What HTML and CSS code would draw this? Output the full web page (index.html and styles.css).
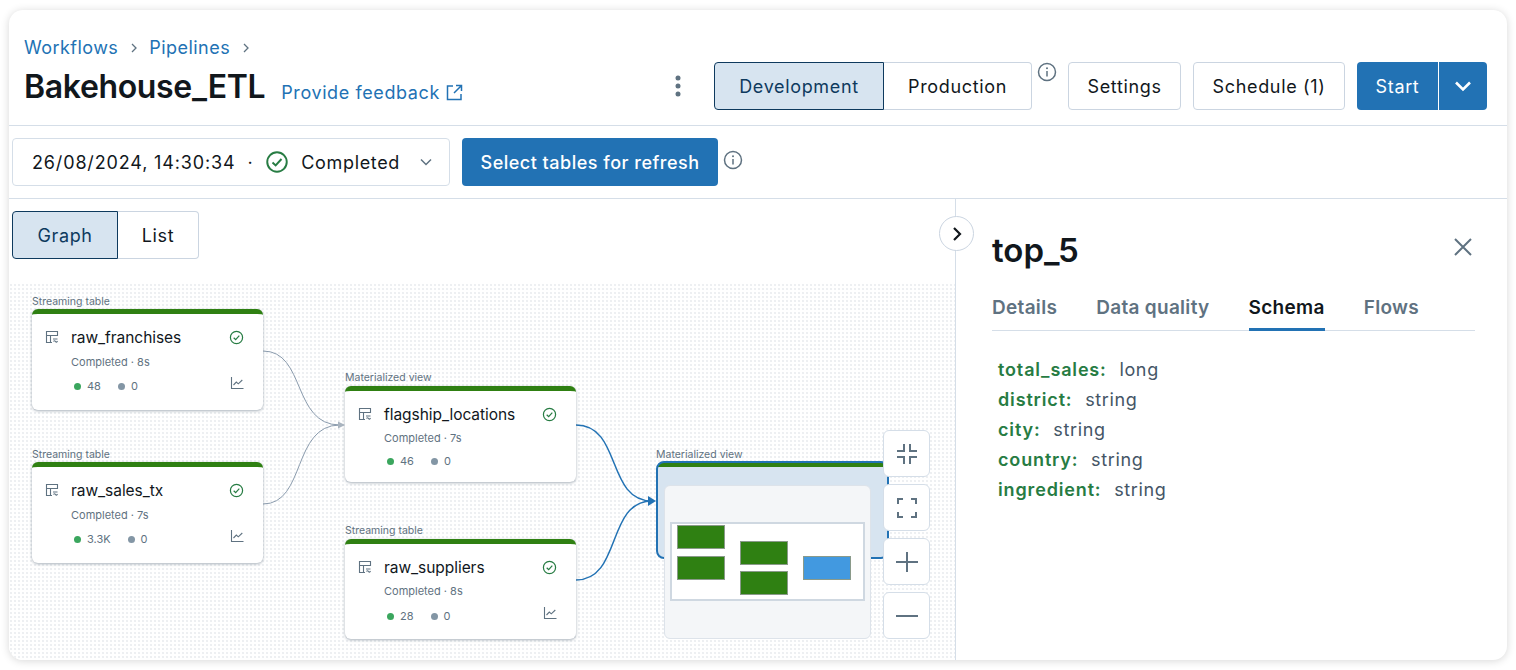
FILE: index.html
```html
<!DOCTYPE html>
<html lang="en">

<head>
    <meta charset="UTF-8">
    <title>Bakehouse_ETL</title>
    <link rel="stylesheet" href="styles.css">
</head>

<body>
    <svg class="defs" width="0" height="0">
        <symbol id="i-table" viewBox="0 0 14 14">
            <path d="M1.5 1.5h11v4h-11zM1.5 5.500v7h5.500M5.500 5.500v7M8 9h4.500M8.500 11.500q1-1.500 2 0t2-.5" fill="none" stroke="currentColor" stroke-width="1.100"/>
        </symbol>
        <symbol id="i-check" viewBox="0 0 16 16">
            <circle cx="8" cy="8" r="6.500" fill="none" stroke="currentColor" stroke-width="1.300"/>
            <path d="M5 8.300l2.100 2 3.900-4.300" fill="none" stroke="currentColor" stroke-width="1.300"/>
        </symbol>
        <symbol id="i-chart" viewBox="0 0 14 14">
            <path d="M1.500 1v11.500h12M3.500 9l2.800-3 2 1.800 4-3.800" fill="none" stroke="currentColor" stroke-width="1.100"/>
        </symbol>
        <symbol id="i-info" viewBox="0 0 20 20">
            <circle cx="10" cy="10" r="8.500" fill="none" stroke="currentColor" stroke-width="1.500"/>
            <path d="M10 9v5.500" stroke="currentColor" stroke-width="1.500"/>
            <circle cx="10" cy="6.300" r="1" fill="currentColor"/>
        </symbol>
    </svg>

    <div class="card">
        <header class="page-header">
            <div class="title-block">
                <nav class="crumbs">
                    <a>Workflows</a>
                    <svg class="crumb-sep" width="8" height="10" viewBox="0 0 8 10"><path d="M2 1l4 4-4 4" fill="none" stroke="currentColor" stroke-width="1.300"/></svg>
                    <a>Pipelines</a>
                    <svg class="crumb-sep" width="8" height="10" viewBox="0 0 8 10"><path d="M2 1l4 4-4 4" fill="none" stroke="currentColor" stroke-width="1.300"/></svg>
                </nav>
                <div class="title-row">
                    <h1>Bakehouse_ETL</h1>
                    <a class="feedback">Provide feedback
                        <svg width="17" height="17" viewBox="0 0 17 17"><path d="M7 2H1.500v13.500H15V10M10 1.500h5.500V7M15.500 1.500L8 9" fill="none" stroke="currentColor" stroke-width="1.500"/></svg>
                    </a>
                </div>
            </div>
            <div class="header-actions">
                <svg class="kebab" width="6" height="22" viewBox="0 0 6 22"><circle cx="3" cy="3" r="2.500"/><circle cx="3" cy="11" r="2.500"/><circle cx="3" cy="19" r="2.500"/></svg>
                <div class="segmented mode-switch">
                    <button class="seg seg-on seg-dev">Development</button>
                    <button class="seg seg-prod">Production</button>
                </div>
                <svg class="info info-mode" width="20" height="20"><use href="#i-info"/></svg>
                <button class="btn btn-settings">Settings</button>
                <button class="btn btn-schedule">Schedule (1)</button>
                <div class="start-split">
                    <button class="start-main">Start</button>
                    <button class="start-more">
                        <svg width="18" height="12" viewBox="0 0 18 12"><path d="M2 2.500l7 7 7-7" fill="none" stroke="currentColor" stroke-width="2.600"/></svg>
                    </button>
                </div>
            </div>
        </header>

        <div class="toolbar">
            <div class="run-select">
                <span class="run-date">26/08/2024, 14:30:34</span>
                <span class="dot-sep">·</span>
                <svg class="run-check" width="24" height="24"><use href="#i-check"/></svg>
                <span>Completed</span>
                <svg class="run-caret" width="12" height="8" viewBox="0 0 12 8"><path d="M1 1.500l5 5 5-5" fill="none" stroke="currentColor" stroke-width="1.500"/></svg>
            </div>
            <button class="btn-primary">Select tables for refresh</button>
            <svg class="info info-refresh" width="20" height="20"><use href="#i-info"/></svg>
        </div>

        <div class="main">
            <section class="graph-pane">
                <div class="view-switch">
                    <div class="segmented">
                        <button class="seg seg-on seg-graph">Graph</button>
                        <button class="seg seg-list">List</button>
                    </div>
                </div>

                <div class="canvas">
                    <svg class="edges" width="946" height="377" viewBox="0 0 946 377">
                        <g fill="none" stroke="#8a9bad" stroke-width="1">
                            <path d="M254 68C297 68 283 142 331 142"/>
                            <path d="M254 221C297 221 283 142 331 142"/>
                        </g>
                        <path d="M329 138.500l7 3.500-7 3.500z" fill="#a9b4bf"/>
                        <g fill="none" stroke="#2272b4" stroke-width="1.500">
                            <path d="M567 142C613 142 597 218 643 218"/>
                            <path d="M567 297C613 297 597 218 643 218"/>
                        </g>
                        <path d="M639 213l8 5-8 5z" fill="#2272b4"/>
                    </svg>

                    <div class="node node-a">
                        <div class="node-type">Streaming table</div>
                        <div class="node-box">
                            <div class="node-head">
                                <svg class="node-icon" width="14" height="14"><use href="#i-table"/></svg>
                                <span class="node-name">raw_franchises</span>
                                <svg class="node-status" width="15" height="15"><use href="#i-check"/></svg>
                            </div>
                            <div class="node-meta">Completed · 8s</div>
                            <div class="node-stats">
                                <span class="dot dot-ok"></span><span class="stat">48</span>
                                <span class="dot dot-off"></span><span class="stat">0</span>
                                <svg class="node-chart" width="14" height="14"><use href="#i-chart"/></svg>
                            </div>
                        </div>
                    </div>

                    <div class="node node-b">
                        <div class="node-type">Streaming table</div>
                        <div class="node-box">
                            <div class="node-head">
                                <svg class="node-icon" width="14" height="14"><use href="#i-table"/></svg>
                                <span class="node-name">raw_sales_tx</span>
                                <svg class="node-status" width="15" height="15"><use href="#i-check"/></svg>
                            </div>
                            <div class="node-meta">Completed · 7s</div>
                            <div class="node-stats">
                                <span class="dot dot-ok"></span><span class="stat">3.3K</span>
                                <span class="dot dot-off"></span><span class="stat">0</span>
                                <svg class="node-chart" width="14" height="14"><use href="#i-chart"/></svg>
                            </div>
                        </div>
                    </div>

                    <div class="node node-c">
                        <div class="node-type">Materialized view</div>
                        <div class="node-box">
                            <div class="node-head">
                                <svg class="node-icon" width="14" height="14"><use href="#i-table"/></svg>
                                <span class="node-name">flagship_locations</span>
                                <svg class="node-status" width="15" height="15"><use href="#i-check"/></svg>
                            </div>
                            <div class="node-meta">Completed · 7s</div>
                            <div class="node-stats">
                                <span class="dot dot-ok"></span><span class="stat">46</span>
                                <span class="dot dot-off"></span><span class="stat">0</span>
                            </div>
                        </div>
                    </div>

                    <div class="node node-d">
                        <div class="node-type">Streaming table</div>
                        <div class="node-box">
                            <div class="node-head">
                                <svg class="node-icon" width="14" height="14"><use href="#i-table"/></svg>
                                <span class="node-name">raw_suppliers</span>
                                <svg class="node-status" width="15" height="15"><use href="#i-check"/></svg>
                            </div>
                            <div class="node-meta">Completed · 8s</div>
                            <div class="node-stats">
                                <span class="dot dot-ok"></span><span class="stat">28</span>
                                <span class="dot dot-off"></span><span class="stat">0</span>
                                <svg class="node-chart" width="14" height="14"><use href="#i-chart"/></svg>
                            </div>
                        </div>
                    </div>

                    <div class="node node-e">
                        <div class="node-type">Materialized view</div>
                        <div class="node-box node-selected"></div>
                    </div>

                    <div class="minimap">
                        <div class="minimap-view">
                            <div class="mini-col mini-col-first">
                                <span class="mini mini-green"></span>
                                <span class="mini mini-green"></span>
                            </div>
                            <div class="mini-col mini-col-mid">
                                <span class="mini mini-green"></span>
                                <span class="mini mini-green"></span>
                            </div>
                            <div class="mini-col mini-col-last">
                                <span class="mini mini-blue"></span>
                            </div>
                        </div>
                    </div>

                    <div class="zoom-controls">
                        <button class="zoom-btn">
                            <svg width="24" height="24" viewBox="0 0 24 24"><path d="M9 2v7H2M15 2v7h7M9 22v-7H2M15 22v-7h7" fill="none" stroke="currentColor" stroke-width="2"/></svg>
                        </button>
                        <button class="zoom-btn">
                            <svg width="24" height="24" viewBox="0 0 24 24"><path d="M8 3H3v5M16 3h5v5M8 21H3v-5M16 21h5v-5" fill="none" stroke="currentColor" stroke-width="2"/></svg>
                        </button>
                        <button class="zoom-btn">
                            <svg width="24" height="24" viewBox="0 0 24 24"><path d="M12 2v20M1 12h22" fill="none" stroke="currentColor" stroke-width="2"/></svg>
                        </button>
                        <button class="zoom-btn">
                            <svg width="24" height="24" viewBox="0 0 24 24"><path d="M1 12h22" fill="none" stroke="currentColor" stroke-width="2"/></svg>
                        </button>
                    </div>
                </div>
            </section>

            <aside class="side-pane">
                <button class="collapse">
                    <svg width="10" height="16" viewBox="0 0 10 16"><path d="M2 2l6 6-6 6" fill="none" stroke="currentColor" stroke-width="2.200"/></svg>
                </button>
                <div class="side-head">
                    <h2>top_5</h2>
                    <svg class="side-close" width="20" height="20" viewBox="0 0 20 20"><path d="M2 2l16 16M18 2L2 18" fill="none" stroke="currentColor" stroke-width="2"/></svg>
                </div>
                <div class="tabs">
                    <span class="tab">Details</span>
                    <span class="tab">Data quality</span>
                    <span class="tab tab-on">Schema</span>
                    <span class="tab">Flows</span>
                </div>
                <ul class="schema">
                    <li><b>total_sales:</b> long</li>
                    <li><b>district:</b> string</li>
                    <li><b>city:</b> string</li>
                    <li><b>country:</b> string</li>
                    <li><b>ingredient:</b> string</li>
                </ul>
            </aside>
        </div>
    </div>
</body>

</html>
```

FILE: styles.css
```css
* {
    box-sizing: border-box;
}

body {
    margin: 0;
    padding: 10px 9px 10px 9px;
    height: 670px;
    background: #fff;
    font-family: Inter, "Liberation Sans", sans-serif;
    color: #11171c;
    overflow: hidden;
}

button {
    font: inherit;
    letter-spacing: 0.65px;
    color: inherit;
    background: #fff;
    cursor: pointer;
}

.defs {
    position: absolute;
}

.card {
    width: 1498px;
    height: 650px;
    background: #fff;
    border-radius: 14px;
    box-shadow: 0 1px 8px rgba(0, 0, 0, 0.16);
    display: flex;
    flex-direction: column;
    overflow: hidden;
}

/* header */
.page-header {
    height: 116px;
    flex: none;
    display: flex;
    justify-content: space-between;
    padding: 24px 20px 0 15px;
    border-bottom: 1px solid #d5dee8;
}

.crumbs {
    display: flex;
    align-items: center;
    height: 26px;
    font-size: 18px;
    letter-spacing: 0.45px;
    color: #2272b4;
}

.crumb-sep {
    margin: 1px 11px 0 12px;
    color: #5f7281;
}

.title-row {
    display: flex;
    align-items: baseline;
    margin-top: 7px;
}

h1 {
    margin: 0;
    font-size: 32px;
    line-height: 40px;
    font-weight: 600;
    letter-spacing: -0.35px;
}

.feedback {
    display: flex;
    align-items: center;
    gap: 6px;
    margin-left: 16px;
    font-size: 18px;
    letter-spacing: 0.6px;
    color: #2272b4;
    position: relative;
    top: 1px;
}

.header-actions {
    display: flex;
    align-items: flex-start;
    padding-top: 28px;
}

.kebab {
    fill: #5f7281;
    margin: 13px 33px 0 0;
}

.segmented {
    display: flex;
    height: 48px;
}

.seg {
    height: 48px;
    font-size: 18px;
    border: 1px solid #cbd5e1;
    padding: 0;
}

.seg-on {
    background: #d7e4f0;
    border-color: #0e3a5e;
    color: #0e3a5e;
    border-radius: 4px 0 0 4px;
}

.seg-dev {
    width: 170px;
}

.seg-prod {
    width: 148px;
    border-left: 0;
    border-radius: 0 4px 4px 0;
}

.seg-graph {
    width: 106px;
}

.seg-list {
    width: 81px;
    border-left: 0;
    border-radius: 0 4px 4px 0;
}

.info {
    color: #5f7281;
}

.info-mode {
    margin: 0 11px 0 5px;
}

.btn {
    height: 48px;
    font-size: 18px;
    border: 1px solid #cbd5e1;
    border-radius: 4px;
    padding: 0;
}

.btn-settings {
    width: 113px;
    margin-right: 12px;
}

.btn-schedule {
    width: 152px;
    margin-right: 12px;
}

.start-split {
    display: flex;
    height: 48px;
    background: #2272b4;
    border-radius: 4px;
    color: #fff;
}

.start-main,
.start-more {
    background: none;
    border: 0;
    color: #fff;
    font-size: 18px;
    padding: 0;
}

.start-main {
    width: 82px;
    border-right: 1px solid #fff;
}

.start-more {
    width: 48px;
    display: flex;
    align-items: center;
    justify-content: center;
}

/* run toolbar */
.toolbar {
    height: 73px;
    flex: none;
    display: flex;
    align-items: center;
    padding: 0 3px;
    border-bottom: 1px solid #d5dee8;
}

.run-select {
    width: 438px;
    height: 48px;
    display: flex;
    align-items: center;
    padding-left: 19px;
    font-size: 18px;
    letter-spacing: 0.65px;
    border: 1px solid #d5dee8;
    border-radius: 4px;
}

.run-date {
    letter-spacing: 0.85px;
}

.dot-sep {
    margin: 0 12px;
}

.run-check {
    color: #277c43;
    margin: 0 12px 0 0;
}

.run-caret {
    color: #5f7281;
    margin-left: 20px;
}

.btn-primary {
    width: 256px;
    height: 48px;
    margin-left: 12px;
    background: #2272b4;
    color: #fff;
    border: 0;
    border-radius: 4px;
    font-size: 18px;
    font-weight: 500;
    letter-spacing: 0.5px;
    padding: 0;
}

.info-refresh {
    margin: -4px 0 0 5px;
}

/* main area */
.main {
    flex: 1;
    display: flex;
    min-height: 0;
}

.graph-pane {
    width: 947px;
    display: flex;
    flex-direction: column;
    border-right: 1px solid #d5dee8;
}

.view-switch {
    height: 84px;
    flex: none;
    padding: 12px 3px 0;
}

.canvas {
    position: relative;
    flex: 1;
    background-color: #fff;
    background-image: radial-gradient(#e4e7eb 0.6px, transparent 0.9px);
    background-size: 4px 4px;
}

.edges {
    position: absolute;
    left: 0;
    top: 0;
}

.node {
    position: absolute;
    width: 231px;
}

.node-a { left: 23px; top: 12px; }
.node-b { left: 23px; top: 165px; }
.node-c { left: 336px; top: 89px; }
.node-d { left: 336px; top: 242px; }
.node-e { left: 647px; top: 165px; width: 233px; }

.node-type {
    height: 14px;
    font-size: 10.500px;
    line-height: 14px;
    color: #5f7281;
}

.node-c .node-type,
.node-d .node-type {
    line-height: 12px;
}

.node-e .node-type {
    height: 13px;
}

.node-box {
    height: 101px;
    background: #fff;
    border-top: 5px solid #2f8012;
    border-radius: 6px;
    box-shadow: 0 1px 3px rgba(60, 80, 100, 0.45);
    padding: 12px 19px 0 13px;
}

.node-c .node-box {
    height: 96px;
}

.node-d .node-box {
    height: 100px;
}

.node-selected {
    height: 98px;
    background: linear-gradient(#2f8012 4px, #d7e4f0 4px);
    border: 2px solid #2272b4;
    border-radius: 8px;
    box-shadow: none;
}

.node-head {
    display: flex;
    align-items: center;
    height: 22px;
}

.node-icon {
    color: #5f7281;
    margin-right: 12px;
}

.node-name {
    flex: 1;
    font-size: 15.500px;
    letter-spacing: -0.05px;
}

.node-status {
    color: #277c43;
}

.node-meta {
    margin: 7px 0 0 26px;
    font-size: 11px;
    line-height: 14px;
    color: #5f7281;
}

.node-c .node-meta,
.node-d .node-meta {
    margin-top: 6px;
}

.node-stats {
    display: flex;
    align-items: center;
    height: 16px;
    margin: 9px 0 0 29px;
    font-size: 11px;
    color: #5f7281;
}

.node-c .node-stats {
    margin-top: 8px;
}

.node-d .node-stats {
    margin-top: 10px;
}

.dot {
    width: 7px;
    height: 7px;
    border-radius: 50%;
    margin-right: 6px;
}

.dot-ok {
    background: #3ba65e;
}

.dot-off {
    background: #8396a5;
}

.stat {
    margin-right: 17px;
}

.node-chart {
    margin-left: auto;
    margin-top: -6px;
    margin-right: 0;
    color: #5f7281;
}

.minimap {
    position: absolute;
    left: 655px;
    top: 202px;
    width: 207px;
    height: 154px;
    background: #f4f6f8;
    border: 1px solid #dde3ea;
    border-radius: 6px;
    padding: 36px 5px 0;
}

.minimap-view {
    width: 195px;
    height: 79px;
    background: #fff;
    border: 2px solid #cfd8e1;
    display: flex;
    align-items: flex-start;
    gap: 15px;
    padding-left: 5px;
}

.mini-col {
    display: flex;
    flex-direction: column;
    gap: 7px;
}

.mini-col-first {
    margin-top: 1px;
}

.mini-col-mid {
    margin-top: 17px;
    gap: 6px;
}

.mini-col-last {
    margin-top: 32px;
}

.mini {
    width: 48px;
    height: 24px;
    border: 1px solid #8a9a8a;
}

.mini-green {
    background: #2f8012;
}

.mini-blue {
    background: #4299e0;
}

.zoom-controls {
    position: absolute;
    left: 874px;
    top: 147px;
    display: flex;
    flex-direction: column;
    gap: 7px;
}

.zoom-btn {
    width: 47px;
    height: 47px;
    display: flex;
    align-items: center;
    justify-content: center;
    border: 1px solid #d5dee8;
    border-radius: 6px;
    color: #5f7281;
    padding: 0;
}

/* side pane */
.side-pane {
    position: relative;
    flex: 1;
    padding: 27px 32px 0 36px;
}

.collapse {
    position: absolute;
    left: -17px;
    top: 17px;
    width: 35px;
    height: 35px;
    border-radius: 50%;
    border: 1px solid #cbd5e1;
    display: flex;
    align-items: center;
    justify-content: center;
    padding: 0;
}

.side-head {
    display: flex;
    justify-content: space-between;
    align-items: flex-start;
    height: 55px;
}

h2 {
    margin: 0;
    font-size: 33px;
    line-height: 48px;
    font-weight: 600;
}

.side-close {
    color: #5f7281;
    margin: 11px 2px 0 0;
}

.tabs {
    display: flex;
    gap: 39px;
    height: 50px;
    align-items: flex-start;
    border-bottom: 1px solid #d5dee8;
    padding-top: 14px;
}

.tab {
    height: 36px;
    font-size: 19px;
    line-height: 26px;
    font-weight: 600;
    letter-spacing: 0.3px;
    color: #5f7281;
}

.tab-on {
    color: #11171c;
    border-bottom: 3px solid #2272b4;
}

.schema {
    list-style: none;
    margin: 24px 0 0;
    padding: 0 0 0 6px;
    font-size: 18px;
    line-height: 30px;
    letter-spacing: 0.65px;
    color: #445566;
}

.schema b {
    font-weight: 600;
    letter-spacing: 0.85px;
    color: #277c43;
    margin-right: 7px;
}
```
